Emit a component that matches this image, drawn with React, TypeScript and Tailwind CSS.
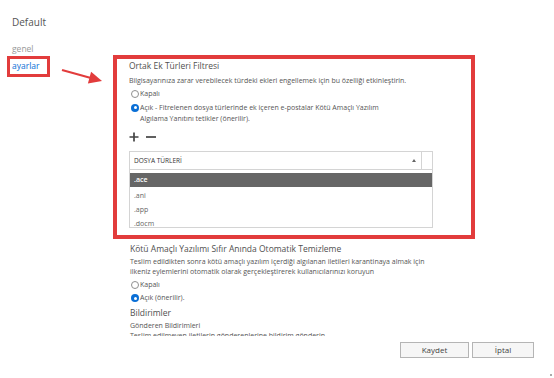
import React from "react";

function Radio({ checked }: { checked?: boolean }) {
  if (checked) {
    return (
      <span className="flex h-[8px] w-[8px] shrink-0 items-center justify-center rounded-full bg-[#0a6fd6]">
        <span className="h-[3px] w-[3px] rounded-full bg-white" />
      </span>
    );
  }
  return <span className="h-[8px] w-[8px] shrink-0 rounded-full border border-[#8f8f8f] bg-white" />;
}

function Arrow() {
  return (
    <svg className="pointer-events-none absolute left-[58px] top-[20px]" width="50" height="26" viewBox="0 0 50 26">
      <line x1="4" y1="8" x2="32" y2="15.7" stroke="#e23c3c" strokeWidth="2.2" />
      <polygon points="44,19 29.9,21.4 33.1,9.8" fill="#e23c3c" />
    </svg>
  );
}

const fileTypes = [".ani", ".app", ".docm"];

export default function App() {
  return (
    <div className="relative flex h-[378px] w-[554px] flex-col overflow-hidden bg-white font-['Open_Sans',sans-serif] text-[#444]">
      <header className="h-[42px] shrink-0 pl-[12px] pt-[15px] text-[10px] leading-[14px] text-[#555]">Default</header>

      <div className="flex h-[294px] shrink-0">
        {/* left navigation */}
        <nav className="relative w-[113px] shrink-0">
          <div className="pl-[12px] pt-[1px] text-[8.5px] leading-[12px] text-[#999]">genel</div>
          <div className="ml-[7px] mt-[1px] h-[21px] w-[43px] border-[3px] border-[#e23c3c] pl-[2px] pt-[1px] text-[8.5px] leading-[12px] text-[#0a6fd6]">
            ayarlar
          </div>
          <Arrow />
        </nav>

        {/* settings content */}
        <div className="flex-1 overflow-hidden pt-[13px]">
          <div className="w-[362px] border-4 border-[#e23c3c] pb-[7px] pl-[12px] pr-[38px] pt-[1px]">
            <div className="text-[8.5px] leading-[12px] text-[#505050]">Ortak Ek Türleri Filtresi</div>
            <div className="mt-[4px] whitespace-nowrap text-[7px] leading-[10px] text-[#555]">
              Bilgisayarınıza zarar verebilecek türdeki ekleri engellemek için bu özelliği etkinleştirin.
            </div>
            <div className="ml-[2px] mt-[3px] flex h-[10px] items-center gap-[1px] text-[7px] leading-[10px] text-[#555]">
              <Radio />
              <span>Kapalı</span>
            </div>
            <div className="ml-[2px] mt-[3px] flex items-start gap-[1px] text-[7px] leading-[11px] text-[#555]">
              <span className="mt-[1.5px]">
                <Radio checked />
              </span>
              <div className="whitespace-nowrap">
                <div>Açık - Fitrelenen dosya türlerinde ek içeren e-postalar Kötü Amaçlı Yazılım</div>
                <div>Algılama Yanıtını tetikler (önerilir).</div>
              </div>
            </div>

            <div className="mt-[7px] flex h-[12px] items-center gap-[7px]">
              <svg width="10" height="10" viewBox="0 0 10 10">
                <path d="M5 0.5v9M0.5 5h9" stroke="#444" strokeWidth="1.7" />
              </svg>
              <svg width="10" height="10" viewBox="0 0 10 10">
                <path d="M0 5h10" stroke="#444" strokeWidth="1.7" />
              </svg>
            </div>

            <div className="mt-[8px] flex h-[19px] border border-[#d4d4d4]">
              <div className="flex flex-1 items-center justify-between border-r border-[#d4d4d4] pl-[4px] pr-[5px]">
                <span className="text-[6.5px] leading-[10px] text-[#333]">DOSYA TÜRLERİ</span>
                <span className="h-0 w-0 border-x-[2.5px] border-b-[3px] border-x-transparent border-b-[#666]" />
              </div>
              <div className="w-[10px]" />
            </div>
            <div className="h-[58px] overflow-hidden border border-t-0 border-[#d4d4d4] pt-[3px]">
              <div className="flex h-[14px] items-center bg-[#666] pl-[4px] text-[7px] font-semibold text-white">.ace</div>
              <div className="mt-[2px]">
                {fileTypes.map((t) => (
                  <div key={t} className="flex h-[14px] items-center pl-[4px] text-[7px] text-[#666]">
                    {t}
                  </div>
                ))}
              </div>
            </div>
          </div>

          <div className="pl-[17px]">
            <div className="mt-[4px] whitespace-nowrap text-[8.5px] leading-[12px] text-[#505050]">
              Kötü Amaçlı Yazılımı Sıfır Anında Otomatik Temizleme
            </div>
            <div className="mt-[2px] whitespace-nowrap text-[7px] leading-[10px] text-[#555]">
              <div>Teslim edildikten sonra kötü amaçlı yazılım içerdiği algılanan iletileri karantinaya almak için</div>
              <div>ilkeniz eylemlerini otomatik olarak gerçekleştirerek kullanıcılarınızı koruyun</div>
            </div>
            <div className="ml-[1px] mt-[3px] flex h-[10px] items-center gap-[1px] text-[7px] leading-[10px] text-[#555]">
              <Radio />
              <span>Kapalı</span>
            </div>
            <div className="ml-[1px] mt-[3px] flex h-[10px] items-center gap-[1px] text-[7px] leading-[10px] text-[#555]">
              <Radio checked />
              <span>Açık (önerilir).</span>
            </div>
            <div className="mt-[4px] text-[8.5px] leading-[12px] text-[#505050]">Bildirimler</div>
            <div className="mt-[2px] text-[7px] leading-[10px] text-[#555]">Gönderen Bildirimleri</div>
            <div className="whitespace-nowrap text-[7px] leading-[10px] text-[#555]">
              Teslim edilmeyen iletilerin gönderenlerine bildirim gönderin
            </div>
          </div>
        </div>
      </div>

      <footer className="flex flex-1 justify-end gap-[3px] pr-[20px] pt-[6px]">
        <button className="h-[16px] w-[69px] border border-[#b5b5b5] bg-[#f6f6f6] text-[8px] leading-[14px] text-[#444]">Kaydet</button>
        <button className="h-[16px] w-[62px] border border-[#b5b5b5] bg-[#f6f6f6] text-[8px] leading-[14px] text-[#444]">İptal</button>
      </footer>

      <span className="absolute bottom-[2px] right-[2px] h-[2px] w-[2px] bg-[#aaa]" />
    </div>
  );
}
